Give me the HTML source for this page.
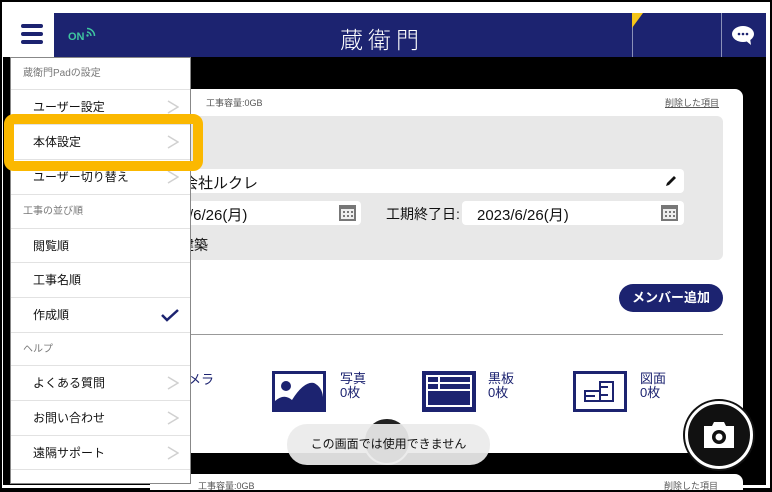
<!DOCTYPE html>
<html><head><meta charset="utf-8"><style>
*{box-sizing:border-box;margin:0;padding:0}
body{width:772px;height:490px;overflow:hidden;background:#000;font-family:"Liberation Sans","Noto Sans CJK JP",sans-serif;position:relative}
.a{position:absolute;white-space:nowrap}
.menu .row{position:absolute;left:0;width:179px;border-bottom:1px solid #e2e2e2;font-size:12px;color:#111;padding-left:22px}
.menu .hd{color:#777;font-size:10px;padding-left:12px}
.chev{position:absolute;right:11px;top:50%;margin-top:-7px;width:12px;height:14px}
.lbl{position:absolute;color:#1c2370;font-size:13px;line-height:14px}
</style></head><body>
<div class="a" style="left:2px;top:2px;width:768px;height:486px;background:#fff"></div>
<div class="a" style="left:3px;top:57px;width:763px;height:428px;background:#000"></div>
<div class="a" style="left:54px;top:13px;width:712px;height:44px;background:#1c2370"></div>
<div class="a" style="left:632px;top:13px;width:1px;height:44px;background:#8a90b8"></div>
<div class="a" style="left:721px;top:13px;width:1px;height:44px;background:#8a90b8"></div>
<svg class="a" style="left:632px;top:13px" width="14" height="16"><polygon points="0,0 0,15 11,0" fill="#f5c518"/></svg>
<div class="a" style="left:68px;top:31px;color:#3fc6a0;font-size:11px;font-weight:bold">ON</div>
<svg class="a" style="left:86px;top:27px" width="10" height="10"><circle cx="1.5" cy="8.5" r="1.2" fill="#3fc6a0"/><path d="M1 5 A4 4 0 0 1 5 9" stroke="#3fc6a0" stroke-width="1.5" fill="none"/><path d="M1 1.5 A7.5 7.5 0 0 1 8.5 9" stroke="#3fc6a0" stroke-width="1.5" fill="none"/></svg>
<div class="a" style="left:340px;top:21px;color:#fff;font-size:23px;letter-spacing:5px;font-weight:300">蔵衛門</div>
<svg class="a" style="left:731px;top:24px" width="26" height="22"><ellipse cx="12" cy="10" rx="11" ry="8" fill="#fff"/><path d="M14 16 L20 21 L19 14Z" fill="#fff"/><circle cx="8" cy="10" r="1.3" fill="#1c2370"/><circle cx="12" cy="10" r="1.3" fill="#1c2370"/><circle cx="16" cy="10" r="1.3" fill="#1c2370"/></svg>
<div class="a" style="left:21px;top:24px;width:22px;height:4px;border-radius:2px;background:#1c2370"></div>
<div class="a" style="left:21px;top:32px;width:22px;height:4px;border-radius:2px;background:#1c2370"></div>
<div class="a" style="left:21px;top:40px;width:22px;height:4px;border-radius:2px;background:#1c2370"></div>
<div class="a" style="left:150px;top:89px;width:593px;height:364px;background:#fff;border-radius:0 8px 0 0"></div>
<div class="a" style="left:206px;top:96px;font-size:9px;color:#555">工事容量:0GB</div>
<div class="a" style="left:665px;top:96px;font-size:9px;color:#555;text-decoration:underline">削除した項目</div>
<div class="a" style="left:150px;top:116px;width:573px;height:144px;background:#e8e8e8;border-radius:0 6px 6px 0"></div>
<div class="a" style="left:150px;top:169px;width:534px;height:24px;background:#fff;border-radius:4px"></div>
<div class="a" style="left:183px;top:172px;font-size:15px;color:#111">会社ルクレ</div>
<svg class="a" style="left:664px;top:174px" width="14" height="14"><path d="M2 12 L3 9 L10 2 L12 4 L5 11Z" fill="#111"/></svg>
<div class="a" style="left:150px;top:201px;width:211px;height:24px;background:#fff;border-radius:4px"></div>
<div class="a" style="left:189px;top:204px;font-size:15px;color:#111">/6/26(月)</div>
<div class="a" style="left:386px;top:204px;font-size:14px;color:#111">工期終了日:</div>
<div class="a" style="left:462px;top:201px;width:222px;height:24px;background:#fff;border-radius:4px"></div>
<div class="a" style="left:477px;top:204px;font-size:15px;color:#111">2023/6/26(月)</div>
<svg class="a" style="left:338px;top:203px" width="19" height="19"><rect x="1" y="2" width="17" height="16" fill="#777"/><rect x="3" y="6" width="13" height="10" fill="#eee"/><g fill="#777"><rect x="5" y="8" width="2" height="2"/><rect x="9" y="8" width="2" height="2"/><rect x="13" y="8" width="2" height="2"/><rect x="5" y="12" width="2" height="2"/><rect x="9" y="12" width="2" height="2"/><rect x="13" y="12" width="2" height="2"/></g></svg>
<svg class="a" style="left:660px;top:203px" width="19" height="19"><rect x="1" y="2" width="17" height="16" fill="#777"/><rect x="3" y="6" width="13" height="10" fill="#eee"/><g fill="#777"><rect x="5" y="8" width="2" height="2"/><rect x="9" y="8" width="2" height="2"/><rect x="13" y="8" width="2" height="2"/><rect x="5" y="12" width="2" height="2"/><rect x="9" y="12" width="2" height="2"/><rect x="13" y="12" width="2" height="2"/></g></svg>
<div class="a" style="left:180px;top:235px;font-size:14px;color:#111">建築</div>
<div class="a" style="left:619px;top:284px;width:104px;height:28px;background:#1c2370;border-radius:14px;color:#fff;font-size:13px;line-height:28px;text-align:center;font-weight:bold">メンバー追加</div>
<div class="a" style="left:150px;top:334px;width:573px;height:1px;background:#999"></div>
<div class="lbl" style="left:188px;top:373px">メラ</div>
<svg class="a" style="left:272px;top:371px" width="54" height="41"><rect width="54" height="41" fill="#1c2370"/><rect x="3" y="3" width="48" height="35" fill="#fff"/><circle cx="14" cy="15" r="5" fill="#1c2370"/><path d="M3 38 L3 30 Q12 22 20 29 Q32 10 42 12 Q50 16 51 26 L51 38Z" fill="#1c2370"/></svg>
<div class="lbl" style="left:340px;top:372px">写真<br>0枚</div>
<svg class="a" style="left:422px;top:371px" width="54" height="41"><rect width="54" height="41" fill="#1c2370"/><g stroke="#fff" stroke-width="2" fill="none"><rect x="5" y="5" width="44" height="30"/><line x1="5" y1="12" x2="49" y2="12"/><line x1="5" y1="19" x2="49" y2="19"/><line x1="17" y1="5" x2="17" y2="19"/></g></svg>
<div class="lbl" style="left:488px;top:372px">黒板<br>0枚</div>
<svg class="a" style="left:573px;top:371px" width="54" height="41"><rect x="1.5" y="1.5" width="51" height="38" fill="#fff" stroke="#1c2370" stroke-width="3"/><path d="M12 20 L12 30 L40 30 L40 11 L27 11 L27 20Z M12 25 L22 25 M27 20 L27 30 M27 16 L35 16 M27 24 L35 24" stroke="#1c2370" stroke-width="2" fill="none"/></svg>
<div class="lbl" style="left:640px;top:372px">図面<br>0枚</div>
<div class="a" style="left:150px;top:474px;width:593px;height:16px;background:#fff;border-radius:0 8px 0 0"></div>
<div class="a" style="left:198px;top:479px;font-size:9px;color:#555">工事容量:0GB</div>
<div class="a" style="left:664px;top:479px;font-size:9px;color:#555">削除した項目</div>
<div class="a" style="left:363px;top:417px;width:48px;height:48px;border-radius:50%;background:#222;border:2px solid #fff"></div>
<div class="a" style="left:287px;top:424px;width:203px;height:41px;border-radius:20px;background:rgba(235,235,235,0.93);font-size:12px;color:#111;line-height:41px;text-align:center">この画面では使用できません</div>
<div class="a" style="left:685px;top:401px;width:68px;height:68px;border-radius:50%;background:#111;border:3px solid #fff;box-shadow:0 0 0 2px #111"></div>
<svg class="a" style="left:701px;top:420px" width="36" height="30"><path d="M3 6 L11 6 L13 2 L23 2 L25 6 L33 6 L33 28 L3 28Z" fill="#fff"/><circle cx="18" cy="17" r="7" fill="#111"/><circle cx="18" cy="17" r="3.5" fill="#fff"/></svg>
<div class="a menu" style="left:10px;top:57px;width:181px;height:427px;background:#fff;border:1px solid #888">
<div class="row hd" style="top:0;height:32px;line-height:32px">蔵衛門Padの設定</div>
<div class="row" style="top:32px;height:35px;line-height:35px">ユーザー設定<svg class="chev"><path d="M1 1 L11 7 L1 13" stroke="#d0d0d0" stroke-width="1.5" fill="none"/></svg></div>
<div class="row" style="top:67px;height:35px;line-height:35px">本体設定<svg class="chev"><path d="M1 1 L11 7 L1 13" stroke="#d0d0d0" stroke-width="1.5" fill="none"/></svg></div>
<div class="row" style="top:102px;height:35px;line-height:35px">ユーザー切り替え<svg class="chev"><path d="M1 1 L11 7 L1 13" stroke="#d0d0d0" stroke-width="1.5" fill="none"/></svg></div>
<div class="row hd" style="top:137px;height:34px;line-height:34px">工事の並び順</div>
<div class="row" style="top:171px;height:34px;line-height:34px">閲覧順</div>
<div class="row" style="top:205px;height:35px;line-height:35px">工事名順</div>
<div class="row" style="top:240px;height:35px;line-height:35px">作成順<svg class="chev" style="width:20px;height:14px;right:10px"><path d="M2 7 L7 12 L18 2" stroke="#1c2370" stroke-width="2.5" fill="none"/></svg></div>
<div class="row hd" style="top:275px;height:33px;line-height:33px">ヘルプ</div>
<div class="row" style="top:308px;height:35px;line-height:35px">よくある質問<svg class="chev"><path d="M1 1 L11 7 L1 13" stroke="#d0d0d0" stroke-width="1.5" fill="none"/></svg></div>
<div class="row" style="top:343px;height:35px;line-height:35px">お問い合わせ<svg class="chev"><path d="M1 1 L11 7 L1 13" stroke="#d0d0d0" stroke-width="1.5" fill="none"/></svg></div>
<div class="row" style="top:378px;height:34px;line-height:34px">遠隔サポート<svg class="chev"><path d="M1 1 L11 7 L1 13" stroke="#d0d0d0" stroke-width="1.5" fill="none"/></svg></div>
</div>
<div class="a" style="left:4px;top:114px;width:199px;height:57px;border:10px solid #fbb800;border-radius:10px"></div>
</body></html>
